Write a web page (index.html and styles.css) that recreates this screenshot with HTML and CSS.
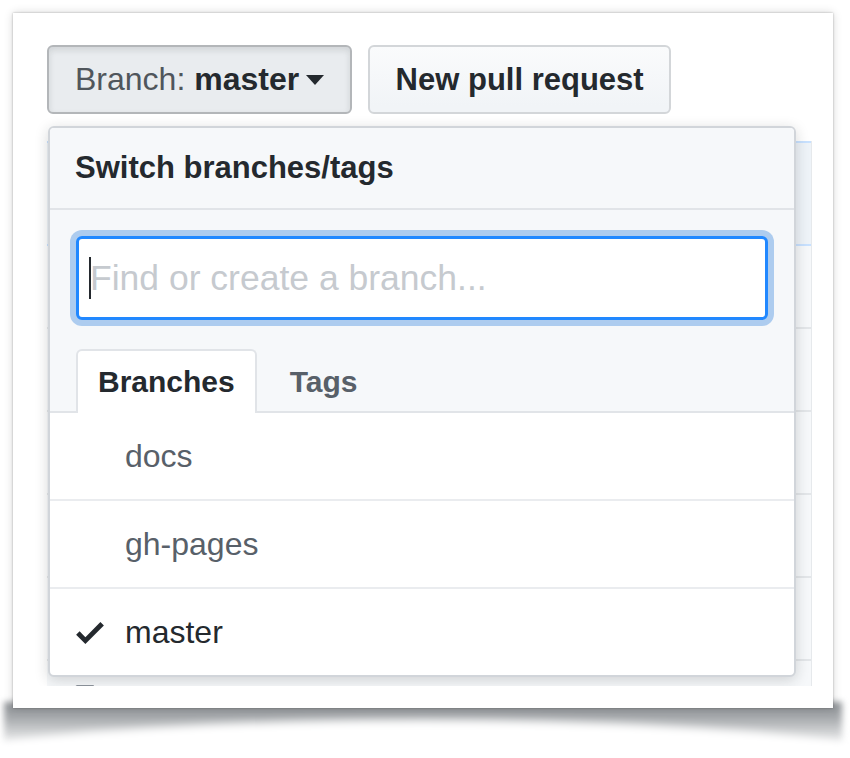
FILE: index.html
```html
<!DOCTYPE html>
<html lang="en">
<head>
<meta charset="utf-8">
<title>Switch branches/tags</title>
<link rel="stylesheet" href="styles.css">
</head>
<body>
<div class="stage">
<div class="frame">
  <div class="shot">
    <div class="toolbar">
      <button class="btn btn-selected" type="button"><span class="btn-label">Branch:</span>&nbsp;<span class="btn-value">master</span><span class="dropdown-caret"></span></button>
      <button class="btn btn-plain" type="button">New pull request</button>
    </div>

    <div class="filebox">
      <div class="commit-tease"></div>
      <div class="file-row"></div>
      <div class="file-row"></div>
      <div class="file-row"></div>
      <div class="file-row"></div>
      <div class="file-row"></div>
      <div class="file-row file-row-icon">
        <svg class="file-icon" width="26" height="35" viewBox="0 0 12 16" aria-hidden="true"><path fill="#6a737d" d="M6 5H2V4h4v1zM2 8h7V7H2v1zm0 2h7V9H2v1zm0 2h7v-1H2v1zm10-7.5V14c0 .55-.45 1-1 1H1c-.55 0-1-.45-1-1V2c0-.55.45-1 1-1h7.5L12 4.5zM11 5L8 2H1v12h10V5z"/></svg>
      </div>
    </div>

    <div class="select-menu">
      <div class="menu-header">Switch branches/tags</div>
      <div class="menu-filter">
        <div class="filter-input" role="textbox"><span class="text-caret"></span><span class="placeholder">Find or create a branch...</span></div>
      </div>
      <div class="menu-tabs">
        <div class="menu-tab selected">Branches</div>
        <div class="menu-tab">Tags</div>
      </div>
      <div class="menu-list">
        <div class="menu-item"><span class="check"></span><span class="item-name">docs</span></div>
        <div class="menu-item"><span class="check"></span><span class="item-name">gh-pages</span></div>
        <div class="menu-item current"><span class="check"><svg width="28" height="37" viewBox="0 0 12 16" aria-hidden="true"><path fill="#24292e" d="M12 5l-8 8-4-4 1.5-1.5L4 10l6.5-6.5L12 5z"/></svg></span><span class="item-name">master</span></div>
      </div>
    </div>
  </div>
</div>
</div>
</body>
</html>
```
FILE: styles.css
```css
html, body {
  margin: 0;
  padding: 0;
}

body {
  font-family: "Liberation Sans", Arial, sans-serif;
  color: #24292e;
}

.stage {
  position: relative;
  width: 850px;
  height: 758px;
  overflow: hidden;
  isolation: isolate;
  background: #fff;
  padding: 13px;
  box-sizing: border-box;
}

.frame {
  position: relative;
  width: 820px;
  height: 695px;
  background: #fff;
  box-shadow: 0 0 2px rgba(0, 0, 0, 0.28), 0 0 9px rgba(0, 0, 0, 0.16);
}

.frame::before {
  content: "";
  position: absolute;
  z-index: -1;
  left: -9px;
  right: -9px;
  top: calc(100% - 6px);
  height: 46px;
  background: linear-gradient(to bottom, #8a8e92 0%, #a8abae 35%, rgba(215, 215, 215, 0) 100%);
  filter: blur(3px);
}

.frame::after {
  content: "";
  position: absolute;
  z-index: -1;
  left: calc(50% - 500px);
  width: 1000px;
  top: calc(100% + 12px);
  height: 100px;
  border-radius: 50%;
  background: #fff;
  filter: blur(5px);
}

.shot {
  position: relative;
  height: 673px;
  overflow: hidden;
  padding: 32px 22px 0 34px;
  box-sizing: border-box;
}

/* buttons */
.toolbar {
  display: flex;
  gap: 16px;
}

.btn {
  display: inline-flex;
  align-items: center;
  height: 69px;
  box-sizing: border-box;
  border-radius: 6px;
  border: 2px solid #c9cccf;
  font-family: inherit;
  color: #24292e;
  margin: 0;
  cursor: pointer;
}

.btn-selected {
  padding: 0 26px;
  font-size: 32px;
  background: #e9ecef;
  border-color: #b3b6b9;
  box-shadow: inset 0 3px 6px rgba(27, 31, 35, 0.12);
}

.btn-label {
  color: #50565c;
}

.btn-value {
  font-weight: 700;
}

.dropdown-caret {
  display: inline-block;
  margin-left: 7px;
  width: 0;
  height: 0;
  border-top: 10px solid #24292e;
  border-left: 9px solid transparent;
  border-right: 9px solid transparent;
}

.btn-plain {
  width: 303px;
  justify-content: center;
  padding: 0;
  font-size: 31px;
  font-weight: 700;
  background: linear-gradient(to bottom, #fafbfc, #f1f4f7 90%);
  border-color: #d3d6d9;
}

/* file box behind the menu */
.filebox {
  margin-top: 27px;
  width: 764px;
  background: #f6f8fa;
  border-right: 1px solid #e6e9ec;
}

.commit-tease {
  height: 101px;
  background: #eef3f8;
  border-top: 2px solid #c8e1ff;
  border-bottom: 2px solid #c8e1ff;
}

.file-row {
  height: 81px;
  border-bottom: 2px solid #e3e6e9;
}

.file-row-icon {
  padding: 22px 0 0 28px;
  box-sizing: border-box;
}

.file-icon {
  display: block;
}

/* select menu */
.select-menu {
  position: absolute;
  top: 113px;
  left: 35px;
  width: 748px;
  box-sizing: border-box;
  background: #fff;
  border: 2px solid #d1d5da;
  border-radius: 6px;
  overflow: hidden;
  box-shadow: 0 3px 14px rgba(27, 31, 35, 0.18);
}

.menu-header {
  display: flex;
  align-items: center;
  height: 80px;
  padding-left: 25px;
  background: #f6f8fa;
  border-bottom: 2px solid #e1e4e8;
  font-size: 31px;
  font-weight: 700;
  color: #24292e;
}

.menu-filter {
  background: #f6f8fa;
  padding: 26px 26px 29px;
}

.filter-input {
  display: flex;
  align-items: center;
  height: 84px;
  box-sizing: border-box;
  padding-left: 10px;
  background: #fff;
  border: 3px solid #2188ff;
  border-radius: 6px;
  box-shadow: 0 0 0 6px rgba(3, 102, 214, 0.3);
}

.text-caret {
  display: inline-block;
  width: 2px;
  height: 42px;
  background: #24292e;
  margin-right: -1px;
}

.placeholder {
  font-size: 35.5px;
  color: #c6cacf;
}

.menu-tabs {
  display: flex;
  align-items: flex-end;
  height: 62px;
  padding-left: 26px;
  background: #f6f8fa;
  border-bottom: 2px solid #e1e4e8;
}

.menu-tab {
  display: flex;
  align-items: center;
  height: 64px;
  box-sizing: border-box;
  margin-bottom: -2px;
  padding: 0 20px;
  border: 2px solid transparent;
  border-bottom: 0;
  border-radius: 6px 6px 0 0;
  font-size: 30px;
  font-weight: 700;
  color: #586069;
}

.menu-tab + .menu-tab {
  margin-left: 11px;
}

.menu-tab.selected {
  background: #fff;
  border-color: #e1e4e8;
  color: #24292e;
}

.menu-item {
  display: flex;
  align-items: center;
  height: 86px;
  padding-left: 26px;
  border-bottom: 2px solid #eaecef;
  font-size: 32px;
  color: #586069;
}

.menu-item:last-child {
  border-bottom: 0;
}

.menu-item.current {
  color: #24292e;
}

.check {
  display: flex;
  align-items: center;
  width: 28px;
  height: 37px;
  margin-right: 21px;
}

.check svg {
  display: block;
}
```
